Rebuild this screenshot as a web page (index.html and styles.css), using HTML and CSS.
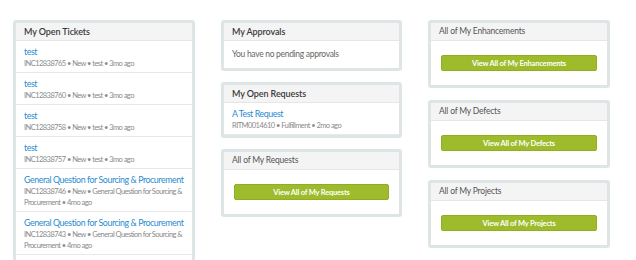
FILE: index.html
```html
<!DOCTYPE html>
<html lang="en">
<head>
  <meta charset="UTF-8">
  <meta name="viewport" content="width=device-width, initial-scale=1.0">
  <title>Service Portal</title>
  <link rel="stylesheet" href="styles.css">
</head>
<body>
  <div class="layout">

    <!-- Columna 1: tickets -->
    <div class="column">
      <div class="panel">
        <div class="panel-heading strong">My Open Tickets</div>
        <ul class="list">
          <li>
            <a href="#">test</a>
            <div class="meta">INC12838765 &bull; New &bull; test &bull; 3mo ago</div>
          </li>
          <li>
            <a href="#">test</a>
            <div class="meta">INC12838760 &bull; New &bull; test &bull; 3mo ago</div>
          </li>
          <li>
            <a href="#">test</a>
            <div class="meta">INC12838758 &bull; New &bull; test &bull; 3mo ago</div>
          </li>
          <li>
            <a href="#">test</a>
            <div class="meta">INC12838757 &bull; New &bull; test &bull; 3mo ago</div>
          </li>
          <li>
            <a href="#">General Question for Sourcing &amp; Procurement</a>
            <div class="meta">INC12838746 &bull; New &bull; General Question for Sourcing &amp; Procurement &bull; 4mo ago</div>
          </li>
          <li>
            <a href="#">General Question for Sourcing &amp; Procurement</a>
            <div class="meta">INC12838743 &bull; New &bull; General Question for Sourcing &amp; Procurement &bull; 4mo ago</div>
          </li>
          <li>
            <a href="#">DD Steward Request</a>
          </li>
        </ul>
      </div>
    </div>

    <!-- Columna 2: aprobaciones y solicitudes -->
    <div class="column">
      <div class="panel">
        <div class="panel-heading strong">My Approvals</div>
        <div class="panel-body">You have no pending approvals</div>
      </div>
      <div class="panel">
        <div class="panel-heading strong">My Open Requests</div>
        <ul class="list">
          <li>
            <a href="#">A Test Request</a>
            <div class="meta">RITM0014610 &bull; Fulfillment &bull; 2mo ago</div>
          </li>
        </ul>
      </div>
      <div class="panel">
        <div class="panel-heading">All of My Requests</div>
        <div class="panel-action">
          <button type="button" class="button">View All of My Requests</button>
        </div>
      </div>
    </div>

    <!-- Columna 3: enlaces -->
    <div class="column wide-gap">
      <div class="panel">
        <div class="panel-heading">All of My Enhancements</div>
        <div class="panel-action">
          <button type="button" class="button">View All of My Enhancements</button>
        </div>
      </div>
      <div class="panel">
        <div class="panel-heading">All of My Defects</div>
        <div class="panel-action">
          <button type="button" class="button">View All of My Defects</button>
        </div>
      </div>
      <div class="panel">
        <div class="panel-heading">All of My Projects</div>
        <div class="panel-action">
          <button type="button" class="button">View All of My Projects</button>
        </div>
      </div>
    </div>

  </div>
</body>
</html>
```

FILE: styles.css
```css
body {
  font-family: Lato, "Open Sans", sans-serif;
  margin: 0;
  padding: 0;
  background-color: #fff;
  color: #555;
  overflow: hidden;
}

.layout {
  display: grid;
  grid-template-columns: 182px 181px 182px;
  column-gap: 26px;
  padding: 20px 0 0 13px;
  align-items: start;
}

.column {
  display: flex;
  flex-direction: column;
  gap: 11px;
}

.column.wide-gap {
  gap: 12px;
}

.panel {
  border: 3px solid #dde5e7;
  border-radius: 3px;
  background-color: #fff;
}

.panel-heading {
  padding: 3px 8px;
  height: 11px;
  line-height: 11px;
  font-size: 8.5px;
  letter-spacing: -0.2px;
  color: #555;
  background-color: #f4f4f4;
  border-bottom: 1px solid #e6e6e6;
}

.panel-heading.strong {
  font-size: 9px;
  letter-spacing: -0.1px;
  color: #3a3a3a;
  font-weight: 600;
}

.panel-body {
  padding: 8px;
  font-size: 8.5px;
  letter-spacing: -0.3px;
  line-height: 11px;
  color: #666;
}

.list {
  list-style: none;
  margin: 0;
  padding: 0;
}

.list li {
  padding: 4px 8px 3px;
  border-bottom: 1px solid #e8e8e8;
}

.list a {
  display: block;
  font-size: 8.8px;
  letter-spacing: -0.42px;
  line-height: 13px;
  white-space: nowrap;
  color: #2a8bd0;
  text-decoration: none;
}

.list .meta {
  font-size: 7.5px;
  letter-spacing: -0.55px;
  line-height: 11px;
  color: #8a8a8a;
}

.panel-action {
  padding: 14px 10px;
}

.button {
  display: block;
  width: 100%;
  height: 16px;
  padding: 0;
  background-color: #9dbb2a;
  border: 1px solid #8fae22;
  border-radius: 2px;
  font-family: inherit;
  font-size: 7.5px;
  letter-spacing: -0.2px;
  font-weight: bold;
  color: #fff;
  cursor: pointer;
}

.button:hover {
  background-color: #8aa722;
}
```
